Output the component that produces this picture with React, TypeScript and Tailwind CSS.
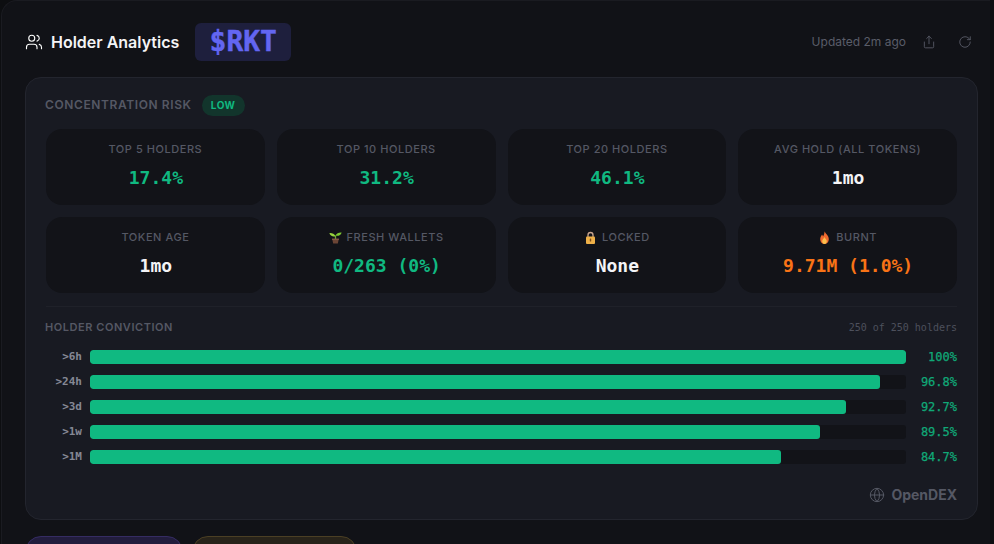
import type { ReactNode } from "react";
import { Users, Share, RotateCw, Globe } from "lucide-react";

const mono = "font-['DejaVu_Sans_Mono','Liberation_Mono',monospace]";

function SproutIcon() {
  return (
    <svg width="13" height="13" viewBox="0 0 13 13">
      <path d="M6.5 8V4.5" stroke="#6fae30" strokeWidth="1.3" fill="none" />
      <path d="M6.5 5.2C5.5 2.8 3 1.8 0.4 2 1 4.5 3.6 5.9 6.5 5.2Z" fill="#9ad63f" />
      <path d="M6.5 4.6C7.4 2.4 9.8 1.2 12.6 1.4 12 3.9 9.4 5.4 6.5 4.6Z" fill="#7cc832" />
      <path d="M3.2 8h6.6l-1 4.6H4.2Z" fill="#6b4535" />
      <path d="M3 7.6h7v1.2H3Z" fill="#8b5e4a" />
    </svg>
  );
}

function LockIcon() {
  return (
    <svg width="13" height="13" viewBox="0 0 13 13">
      <path d="M4 6V4a2.5 2.5 0 0 1 5 0v2" stroke="#c9a58f" strokeWidth="1.3" fill="none" />
      <rect x="2" y="5.5" width="9" height="7.5" rx="1" fill="#eeb048" />
      <rect x="5.8" y="7.5" width="1.4" height="3" rx="0.6" fill="#7a4a1c" />
    </svg>
  );
}

function FlameIcon() {
  return (
    <svg width="13" height="13" viewBox="0 0 13 13">
      <path d="M6.5 0.3C7 2.4 10.8 4.3 10.8 8.2 10.8 11 8.8 13 6.5 13 4.2 13 2.2 11 2.2 8.2 2.2 6 3.4 4.9 4 3.6 4.6 4.4 4.8 5 5 5.6 5.8 4.2 6.6 2.4 6.5 0.3Z" fill="#ef6a2e" />
      <path d="M6.5 6C6.9 7.4 8.8 8.4 8.8 10.2 8.8 11.8 7.7 13 6.5 13 5.3 13 4.2 11.8 4.2 10.2 4.2 8.6 6 7.6 6.5 6Z" fill="#fbc04d" />
    </svg>
  );
}

function Stat({ label, value, color, icon }: { label: string; value: string; color: string; icon?: ReactNode }) {
  return (
    <div className="h-[76px] rounded-2xl bg-[#121318] flex flex-col items-center pt-[13px]">
      <div className="h-[15px] flex items-center gap-[5px] text-[11px] font-medium tracking-[0.55px] text-[#555864] leading-none">
        {icon}
        <span>{label}</span>
      </div>
      <div className={`mt-[9px] ml-px text-[18px] leading-[24px] font-semibold ${mono} ${color}`}>{value}</div>
    </div>
  );
}

function Bar({ label, pct, width }: { label: string; pct: string; width: number }) {
  return (
    <div className="flex items-center h-[14px]">
      <div className={`w-[36px] mr-[8px] text-right text-[11px] font-bold text-[#858895] ${mono}`}>{label}</div>
      <div className="w-[816px] h-[14px] rounded-[3px] bg-[#121318] overflow-hidden">
        <div className="h-full rounded-[3px] bg-[#10b981]" style={{ width: `${width}%` }} />
      </div>
      <div className={`flex-1 text-right text-[12px] text-[#10b981] [-webkit-text-stroke:0.25px] opacity-90 ${mono}`}>{pct}</div>
    </div>
  );
}

export default function App() {
  return (
    <div className="w-[994px] h-[544px] overflow-hidden bg-[#0d0e11] font-['Inter',sans-serif]">
      <div className="w-[989px] h-[580px] ml-px rounded-tl-2xl border-l border-t border-[#1a1b21] bg-[#111217] pl-[23px] pt-[22px]">
        <header className="h-[38px] w-[952px] flex items-center">
          <Users className="w-[18px] h-[18px] text-white mr-2" strokeWidth={1.5} />
          <h1 className="text-[16px] font-semibold text-[#f4f4f6]">Holder Analytics</h1>
          <div className={`ml-4 h-[38px] w-[96px] rounded-md bg-[#1e1f3d] flex items-center justify-center text-[28px] font-bold leading-none text-[#6366f1] [-webkit-text-stroke:0.4px] ${mono}`}>$RKT</div>
          <div className="ml-auto flex items-center text-[#5a5d69]">
            <span className="text-[12px] mr-[16px]">Updated 2m ago</span>
            <Share className="w-[14px] h-[14px] mr-[22px]" strokeWidth={1.5} />
            <RotateCw className="w-[14px] h-[14px] mr-[5px]" strokeWidth={1.5} />
          </div>
        </header>
        <section className="mt-[16px] w-[953px] h-[443px] rounded-2xl border border-[#23252e] bg-[#181a22] px-5 pt-4">
          <div className="-ml-px flex items-center h-[22px]">
            <span className="text-[12px] font-semibold tracking-[0.6px] text-[#555864]">CONCENTRATION RISK</span>
            <span className="ml-[10px] h-[21px] w-[43px] rounded-full bg-[#12352c] flex items-center justify-center text-[10px] font-bold tracking-[0.5px] text-[#10b981]">LOW</span>
          </div>
          <div className="mt-[13px] grid grid-cols-4 gap-3">
            <Stat label="TOP 5 HOLDERS" value="17.4%" color="text-[#10b981]" />
            <Stat label="TOP 10 HOLDERS" value="31.2%" color="text-[#10b981]" />
            <Stat label="TOP 20 HOLDERS" value="46.1%" color="text-[#10b981]" />
            <Stat label="AVG HOLD (ALL TOKENS)" value="1mo" color="text-[#f4f4f6]" />
            <Stat label="TOKEN AGE" value="1mo" color="text-[#f4f4f6]" />
            <Stat icon={<SproutIcon />} label="FRESH WALLETS" value="0/263 (0%)" color="text-[#10b981]" />
            <Stat icon={<LockIcon />} label="LOCKED" value="None" color="text-[#f4f4f6]" />
            <Stat icon={<FlameIcon />} label="BURNT" value="9.71M (1.0%)" color="text-[#f97316]" />
          </div>
          <div className="mt-[13px] border-t border-[#1f2129] pt-[13px] flex items-center justify-between h-[28px]">
            <span className="-ml-px text-[11px] font-semibold tracking-[0.55px] text-[#555864]">HOLDER CONVICTION</span>
            <span className={`text-[10px] text-[#4d505c] ${mono}`}>250 of 250 holders</span>
          </div>
          <div className="mt-[16px] flex flex-col gap-[11px]">
            <Bar label=">6h" pct="100%" width={100} />
            <Bar label=">24h" pct="96.8%" width={96.8} />
            <Bar label=">3d" pct="92.7%" width={92.7} />
            <Bar label=">1w" pct="89.5%" width={89.5} />
            <Bar label=">1M" pct="84.7%" width={84.7} />
          </div>
          <div className="mt-[23px] flex items-center justify-end gap-[6px] text-[#555864]">
            <Globe className="w-[16px] h-[16px]" strokeWidth={1.5} />
            <span className="text-[14px] font-bold leading-[16px]">OpenDEX</span>
          </div>
        </section>
        <div className="mt-4 flex gap-[9px]">
          <div className="w-[158px] h-[40px] rounded-2xl border border-[#352c63] bg-[#221d3d]" />
          <div className="w-[165px] h-[40px] rounded-2xl border border-[#4b3f24] bg-[#28231a]" />
        </div>
      </div>
    </div>
  );
}
